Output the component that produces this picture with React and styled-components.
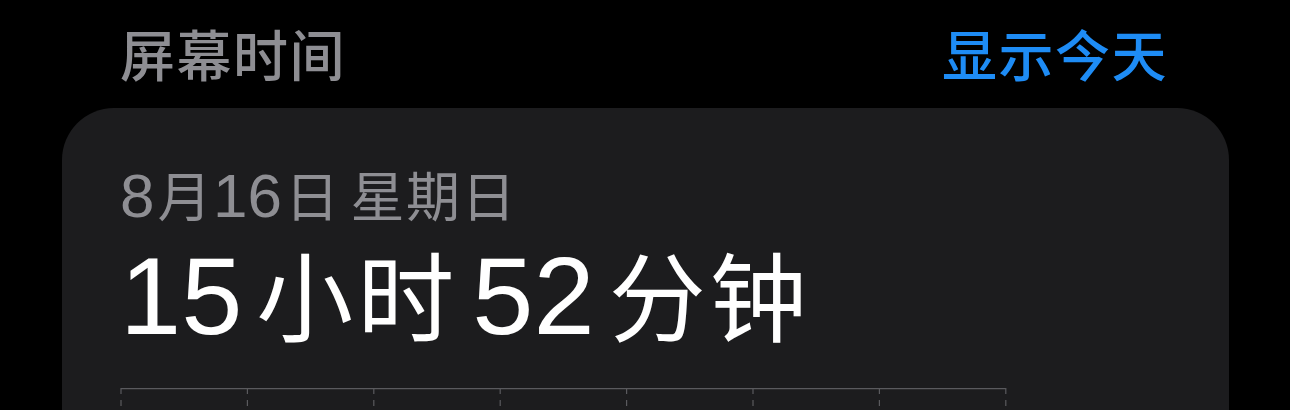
import React from "react";
import styled, { createGlobalStyle } from "styled-components";

const GlobalStyle = createGlobalStyle`
  html, body {
    margin: 0;
    padding: 0;
    background: #000;
  }
  body {
    font-family: "Noto Sans CJK SC", "Noto Sans", sans-serif;
    -webkit-font-smoothing: antialiased;
  }
`;

const Page = styled.div`
  width: 1290px;
  height: 410px;
  overflow: hidden;
  background: #000;
`;

const Header = styled.div`
  display: flex;
  align-items: center;
  justify-content: space-between;
  height: 108px;
  padding: 0 122px 0 120px;
  box-sizing: border-box;
`;

const Title = styled.div`
  font-size: 55px;
  font-weight: 500;
  color: #8e8e93;
  letter-spacing: 1.5px;
  margin-top: -4px;
`;

const LinkButton = styled.div`
  font-size: 55px;
  font-weight: 500;
  color: #1e8cf5;
  letter-spacing: 1.5px;
  margin-top: -4px;
`;

const Card = styled.div`
  margin: 0 61px 0 62px;
  height: 400px;
  background: #1c1c1e;
  border-radius: 52px;
  padding: 50px 0 0 58px;
  box-sizing: border-box;
`;

const DateLine = styled.div`
  display: flex;
  align-items: baseline;
  color: #8e8e93;
  line-height: 72px;
`;

const DateNum = styled.span`
  font-family: "Liberation Sans", "Noto Sans", sans-serif;
  font-size: 62px;
  margin-right: 3px;
`;

const DateWord = styled.span`
  font-size: 54px;
  letter-spacing: 1.5px;
  margin-right: ${(p) => p.$gap || 0}px;
`;

const Total = styled.div`
  display: flex;
  align-items: baseline;
  color: #fff;
  line-height: 120px;
`;

const Num = styled.span`
  font-family: "Liberation Sans", "Noto Sans", sans-serif;
  font-size: 110px;
  font-weight: 400;
  margin-right: 14px;
`;

const Unit = styled.span`
  font-size: 97px;
  font-weight: 400;
  letter-spacing: 4px;
  margin-right: 14px;
`;

const Chart = styled.svg`
  display: block;
  margin-top: 32px;
`;

const ticks = [0, 1, 2, 3, 4, 5, 6, 7];

function Axis() {
  const left = 1;
  const step = 126.4;
  return (
    <Chart width="900" height="30">
      <line x1={left} y1="0.5" x2={left + step * 7} y2="0.5" stroke="#5a5a5e" strokeWidth="1.5" />
      {ticks.map((i) => (
        <g key={i}>
          <line x1={left + step * i} y1="0" x2={left + step * i} y2="6" stroke="#5a5a5e" strokeWidth="1.2" />
          <line
            x1={left + step * i}
            y1="12"
            x2={left + step * i}
            y2="30"
            stroke="#5a5a5e"
            strokeWidth="1.2"
            strokeDasharray="6 6"
          />
        </g>
      ))}
    </Chart>
  );
}

export default function App() {
  return (
    <Page>
      <GlobalStyle />
      <Header>
        <Title>屏幕时间</Title>
        <LinkButton>显示今天</LinkButton>
      </Header>
      <Card>
        <DateLine>
          <DateNum>8</DateNum>
          <DateWord>月</DateWord>
          <DateNum>16</DateNum>
          <DateWord $gap={10}>日</DateWord>
          <DateWord>星期日</DateWord>
        </DateLine>
        <Total>
          <Num>15</Num>
          <Unit>小时</Unit>
          <Num>52</Num>
          <Unit>分钟</Unit>
        </Total>
        <Axis />
      </Card>
    </Page>
  );
}
